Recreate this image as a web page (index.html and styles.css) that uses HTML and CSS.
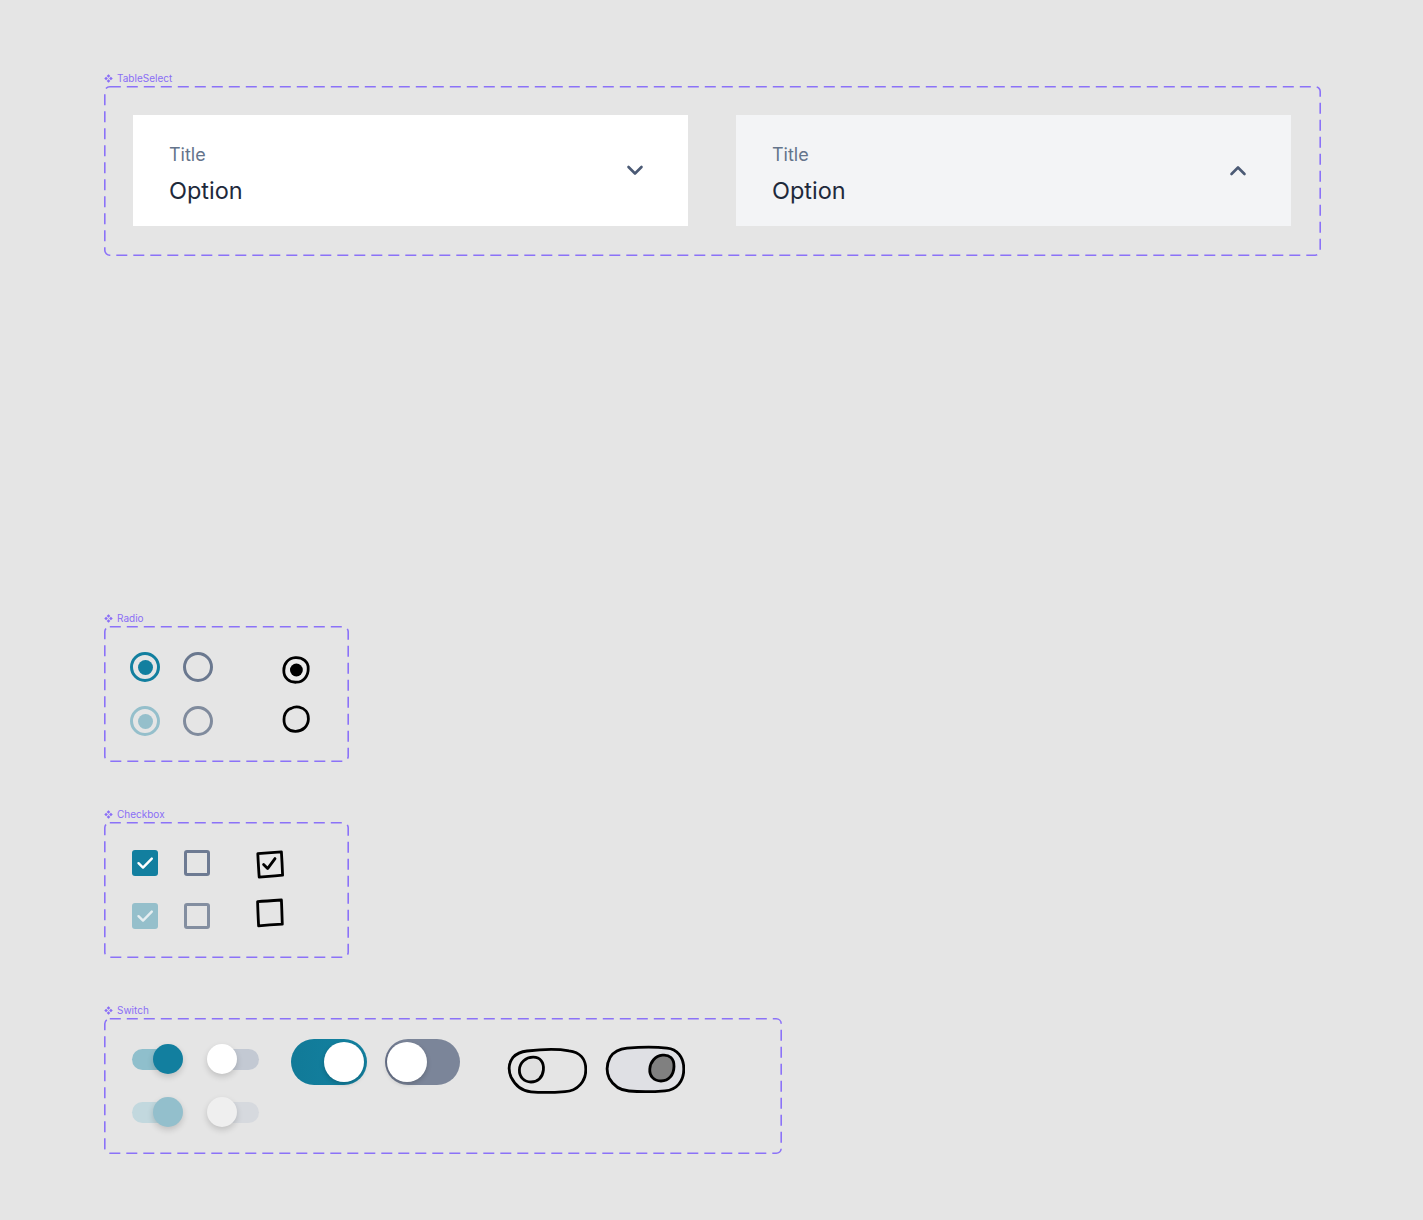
FILE: index.html
```html
<!DOCTYPE html>
<html lang="en">
<head>
<meta charset="utf-8">
<title>Components</title>
<link rel="stylesheet" href="styles.css">
</head>
<body>
<div class="page">

  <section class="comp comp-table">
    <div class="comp-label">
      <svg class="comp-icon" viewBox="0 0 10 10" width="9" height="9"><path d="M5 0.3L7 2.3L5 4.3L3 2.3Z M2.3 3L4.3 5L2.3 7L0.3 5Z M7.7 3L9.7 5L7.7 7L5.7 5Z M5 5.7L7 7.7L5 9.7L3 7.7Z" fill="currentColor"/></svg>
      <span>TableSelect</span>
    </div>
    <div class="frame frame-table">
      <svg class="dash" width="1217" height="170"><rect x="0.8" y="0.8" width="1215.4" height="168.4" rx="5"/></svg>
      <div class="tselect">
        <div class="tselect-text">
          <div class="tselect-title">Title</div>
          <div class="tselect-value">Option</div>
        </div>
        <svg class="chev" width="18" height="11" viewBox="0 0 18 11"><path d="M2.5 2L9 8.5L15.5 2"/></svg>
      </div>
      <div class="tselect tselect-open">
        <div class="tselect-text">
          <div class="tselect-title">Title</div>
          <div class="tselect-value">Option</div>
        </div>
        <svg class="chev" width="18" height="11" viewBox="0 0 18 11"><path d="M2.5 9L9 2.5L15.5 9"/></svg>
      </div>
    </div>
  </section>

  <section class="comp comp-radio">
    <div class="comp-label">
      <svg class="comp-icon" viewBox="0 0 10 10" width="9" height="9"><path d="M5 0.3L7 2.3L5 4.3L3 2.3Z M2.3 3L4.3 5L2.3 7L0.3 5Z M7.7 3L9.7 5L7.7 7L5.7 5Z M5 5.7L7 7.7L5 9.7L3 7.7Z" fill="currentColor"/></svg>
      <span>Radio</span>
    </div>
    <div class="frame frame-small frame-radio">
      <svg class="dash" width="245" height="136"><rect x="0.8" y="0.8" width="243.4" height="134.4" rx="5"/></svg>
      <div class="grid2 radio-grid">
        <span class="radio radio-on"></span>
        <span class="radio radio-off"></span>
        <span class="radio radio-on radio-dis"></span>
        <span class="radio radio-off radio-off-dis"></span>
      </div>
      <div class="hand-col hand-col-radio">
        <svg class="hand" width="30" height="30" viewBox="0 0 30 30">
          <path d="M14.2 2.7C21.6 2.2 27.6 6.8 27.2 13.6C27.4 20.8 22.6 27 15.4 27.2C8.2 27.6 2.7 23 2.8 15.6C2.6 8.6 7.4 3.1 14.2 2.7Z" fill="#ececec"/>
          <circle cx="15.4" cy="15" r="6.4" fill="#000"/>
        </svg>
        <svg class="hand" width="30" height="30" viewBox="0 0 30 30">
          <path d="M10.2 4.4C12.6 3 15.4 2.6 18.2 3.2C23.8 4.4 27.6 8.8 27.4 15C27.2 22.4 21.6 27.2 14.6 27.3C7.6 27.4 2.8 22.8 3 15.6C3 11 5.2 7.2 7.8 5.4C8.6 4.9 9.4 4.7 10.2 4.4Z" fill="none"/>
        </svg>
      </div>
    </div>
  </section>

  <section class="comp comp-check">
    <div class="comp-label">
      <svg class="comp-icon" viewBox="0 0 10 10" width="9" height="9"><path d="M5 0.3L7 2.3L5 4.3L3 2.3Z M2.3 3L4.3 5L2.3 7L0.3 5Z M7.7 3L9.7 5L7.7 7L5.7 5Z M5 5.7L7 7.7L5 9.7L3 7.7Z" fill="currentColor"/></svg>
      <span>Checkbox</span>
    </div>
    <div class="frame frame-small frame-check">
      <svg class="dash" width="245" height="136"><rect x="0.8" y="0.8" width="243.4" height="134.4" rx="5"/></svg>
      <div class="grid2 check-grid">
        <span class="check check-on"><svg width="26" height="26" viewBox="0 0 26 26"><path d="M6.5 13.2L11 17.6L19.8 8.6"/></svg></span>
        <span class="check check-off"></span>
        <span class="check check-on check-dis"><svg width="26" height="26" viewBox="0 0 26 26"><path d="M6.5 13.2L11 17.6L19.8 8.6"/></svg></span>
        <span class="check check-off check-off-dis"></span>
      </div>
      <div class="hand-col hand-col-check">
        <svg class="hand" width="30" height="30" viewBox="0 0 30 30">
          <path d="M2.8 4.6C10 4 18 3.4 26.4 2.8C26.9 10.5 27.3 18.5 27.6 26.2C19.8 26.9 11.8 27.6 4.2 28.2C3.6 20.2 3.2 12.4 2.8 4.6Z" fill="#e8e8e8"/>
          <path d="M8.6 15.6L12.6 19.6L20 9.6" fill="none"/>
        </svg>
        <svg class="hand" width="30" height="30" viewBox="0 0 30 30">
          <path d="M2.6 3.6C10.4 3 18.4 2.5 26.4 2C26.8 10 27 18 27.3 26.2C19.6 26.6 11.6 27.1 3.6 27.8C3.2 19.8 2.8 11.6 2.6 3.6Z" fill="none"/>
        </svg>
      </div>
    </div>
  </section>

  <section class="comp comp-switch">
    <div class="comp-label">
      <svg class="comp-icon" viewBox="0 0 10 10" width="9" height="9"><path d="M5 0.3L7 2.3L5 4.3L3 2.3Z M2.3 3L4.3 5L2.3 7L0.3 5Z M7.7 3L9.7 5L7.7 7L5.7 5Z M5 5.7L7 7.7L5 9.7L3 7.7Z" fill="currentColor"/></svg>
      <span>Switch</span>
    </div>
    <div class="frame frame-switch">
      <svg class="dash" width="678" height="136"><rect x="0.8" y="0.8" width="676.4" height="134.4" rx="5"/></svg>
      <div class="sw-grid">
        <span class="sw sw-on"><span class="sw-track"></span><span class="sw-knob"></span></span>
        <span class="sw sw-off"><span class="sw-track"></span><span class="sw-knob"></span></span>
        <span class="sw sw-on sw-dis"><span class="sw-track"></span><span class="sw-knob"></span></span>
        <span class="sw sw-off sw-dis"><span class="sw-track"></span><span class="sw-knob"></span></span>
      </div>
      <span class="bsw bsw-on"><span class="bsw-knob"></span></span>
      <span class="bsw bsw-off"><span class="bsw-knob"></span></span>
      <svg class="hand hand-sw hand-sw-1" width="80" height="50" viewBox="0 0 80 50">
        <path d="M20 6C35 4.2 52 4 62 5.8C73 7 78.8 14 78.8 24.5C78.8 36 71 45.8 58 46.6C46 47.6 32 47.6 24 46.8C14 46 8 40 4.2 32.4C1.4 26 1.6 18.2 6 12.4C10 8 14 6.6 20 6Z" fill="none"/>
        <path d="M26 12.2C33 12 37.2 17 36.4 25C35.6 32.8 30.4 37 24 37C17.2 37 12.2 32 12.4 25C12.6 17.2 19 12.4 26 12.2Z" fill="#e0e0e0"/>
      </svg>
      <svg class="hand hand-sw hand-sw-2" width="80" height="50" viewBox="0 0 80 50">
        <path d="M22 3.2C36 2 52 2 62 3.2C72 4.2 78.8 12 78.8 24C78.8 36 72 44.8 60 45.8C48 46.8 34 46.8 24 46C14 45.2 8 40 4.2 33.2C1.4 27 1.6 19 5.2 12.2C9 6.4 14 4 22 3.2Z" fill="#dfe0e4"/>
        <path d="M57.4 10.2C64.4 9.4 69.2 13.6 69 21.4C68.8 30 63.8 36 56 36C49 36 44.2 31 44.8 24C45.2 17 50.2 11 57.4 10.2Z" fill="#808080"/>
      </svg>
    </div>
  </section>

</div>
</body>
</html>
```

FILE: styles.css
```css
* { box-sizing: border-box; }

html, body {
  margin: 0;
  padding: 0;
  background: #e5e5e5;
}

body {
  font-family: Inter, "Noto Sans", sans-serif;
  min-height: 1220px;
}

.page {
  padding: 71px 0 0 104px;
}

.comp-label {
  display: flex;
  align-items: center;
  gap: 4px;
  height: 15px;
  line-height: 15px;
  font-size: 10px;
  color: #8a6ef6;
  margin-bottom: 0;
}

.comp-icon { display: block; }

.frame {
  position: relative;
  display: flex;
  align-items: flex-start;
}

.dash {
  position: absolute;
  left: 0;
  top: 0;
  pointer-events: none;
}

.dash rect {
  fill: none;
  stroke: #8b72f8;
  stroke-width: 1.6;
  stroke-dasharray: 11 6;
}

/* TableSelect */
.frame-table {
  width: 1217px;
  height: 170px;
  padding: 29px 0 0 29px;
  gap: 48px;
}

.tselect {
  width: 555px;
  height: 111px;
  background: #ffffff;
  display: flex;
  align-items: center;
  justify-content: space-between;
  padding: 0 44px 0 36px;
}

.tselect-open { background: #f3f4f6; }

.tselect-text {
  display: flex;
  flex-direction: column;
  gap: 10px;
  margin-top: 8px;
}

.tselect-title {
  font-size: 18px;
  line-height: 22px;
  color: #64748b;
}

.tselect-value {
  font-size: 23.5px;
  line-height: 30px;
  color: #1e293b;
}

.chev { display: block; }
.chev path {
  fill: none;
  stroke: #4b5a75;
  stroke-width: 2.6;
  stroke-linecap: round;
  stroke-linejoin: round;
}

.hand path, .hand circle {
  stroke: #000;
  stroke-width: 2.8;
  stroke-linejoin: round;
  stroke-linecap: round;
}
.hand circle { stroke: none; }
.hand { display: block; }

/* Radio & Checkbox frames */
.comp-radio { margin-top: 355px; }
.comp-check { margin-top: 45px; }
.comp-switch { margin-top: 45px; }

.frame-small {
  width: 245px;
  height: 136px;
}

.grid2 { display: grid; }

.frame-radio { padding: 26px 0 0 26px; }
.radio-grid {
  grid-template-columns: 30px 30px;
  grid-auto-rows: 30px;
  column-gap: 23px;
  row-gap: 24px;
}

.radio {
  width: 30px;
  height: 30px;
  border-radius: 50%;
  display: flex;
  align-items: center;
  justify-content: center;
}
.radio-on { border: 3px solid #127f9f; }
.radio-on::after {
  content: "";
  width: 15px;
  height: 15px;
  border-radius: 50%;
  background: #127f9f;
}
.radio-dis { border-color: #95bfcb; }
.radio-dis::after { background: #95bfcb; }
.radio-off { border: 3px solid #6a788f; }
.radio-off-dis { border-color: #808b9d; }

.hand-col {
  display: flex;
  flex-direction: column;
  gap: 19px;
}
.hand-col-radio { margin: 3px 0 0 68px; }

.frame-check { padding: 28px 0 0 28px; }
.check-grid {
  grid-template-columns: 26px 26px;
  grid-auto-rows: 26px;
  column-gap: 26px;
  row-gap: 27px;
}
.check {
  width: 26px;
  height: 26px;
  border-radius: 3px;
  display: block;
}
.check svg { display: block; }
.check-on { background: #127f9f; }
.check-on path {
  fill: none;
  stroke: #ffffff;
  stroke-width: 2.4;
  stroke-linecap: round;
  stroke-linejoin: round;
}
.check-dis { background: #95bfcb; }
.check-dis path { stroke: #e6eef1; }
.check-off { border: 3px solid #6d7a92; }
.check-off-dis { border-color: #838ea0; }
.hand-col-check { margin: -1px 0 0 45px; }

/* Switch */
.frame-switch {
  width: 678px;
  height: 136px;
  padding: 21px 0 0 28px;
}

.sw-grid {
  display: grid;
  grid-template-columns: 51px 52px;
  grid-auto-rows: 30px;
  column-gap: 24px;
  row-gap: 23px;
  margin-top: 5px;
}

.sw {
  position: relative;
  display: block;
  height: 30px;
}
.sw-track {
  position: absolute;
  top: 4.5px;
  height: 21px;
  width: 44px;
  border-radius: 11px;
}
.sw-knob {
  position: absolute;
  top: 0;
  width: 30px;
  height: 30px;
  border-radius: 50%;
  box-shadow: 0 3px 6px rgba(0, 0, 0, 0.16);
}
.sw-on .sw-track { left: 0; background: #8fbfcc; }
.sw-on .sw-knob { right: 0; background: #127f9f; }
.sw-off .sw-track { right: 0; background: #c3c9d3; }
.sw-off .sw-knob { left: 0; background: #ffffff; }
.sw-on.sw-dis .sw-track { background: #c2d8de; }
.sw-on.sw-dis .sw-knob { background: #93bfcc; }
.sw-off.sw-dis .sw-track { background: #d6d9de; }
.sw-off.sw-dis .sw-knob { background: #efefef; }

.bsw {
  position: relative;
  display: block;
  width: 76px;
  height: 46px;
  border-radius: 23px;
}
.bsw-knob {
  position: absolute;
  top: 3px;
  width: 40px;
  height: 40px;
  border-radius: 50%;
  background: #ffffff;
  box-shadow: 0 2px 5px rgba(0, 0, 0, 0.2);
}
.bsw-on {
  margin-left: 32px;
  background: linear-gradient(90deg, #117a98 0%, #1382a1 100%);
}
.bsw-on .bsw-knob { right: 3px; }
.bsw-off {
  margin-left: 18px;
  width: 75px;
  background: linear-gradient(90deg, #68728a 0%, #7b8599 25%, #7b8599 100%);
}
.bsw-off .bsw-knob { left: 2px; }

.hand-sw { margin-top: 6px; }
.hand-sw-1 { margin-left: 47px; }
.hand-sw-2 { margin-left: 18px; }
```
